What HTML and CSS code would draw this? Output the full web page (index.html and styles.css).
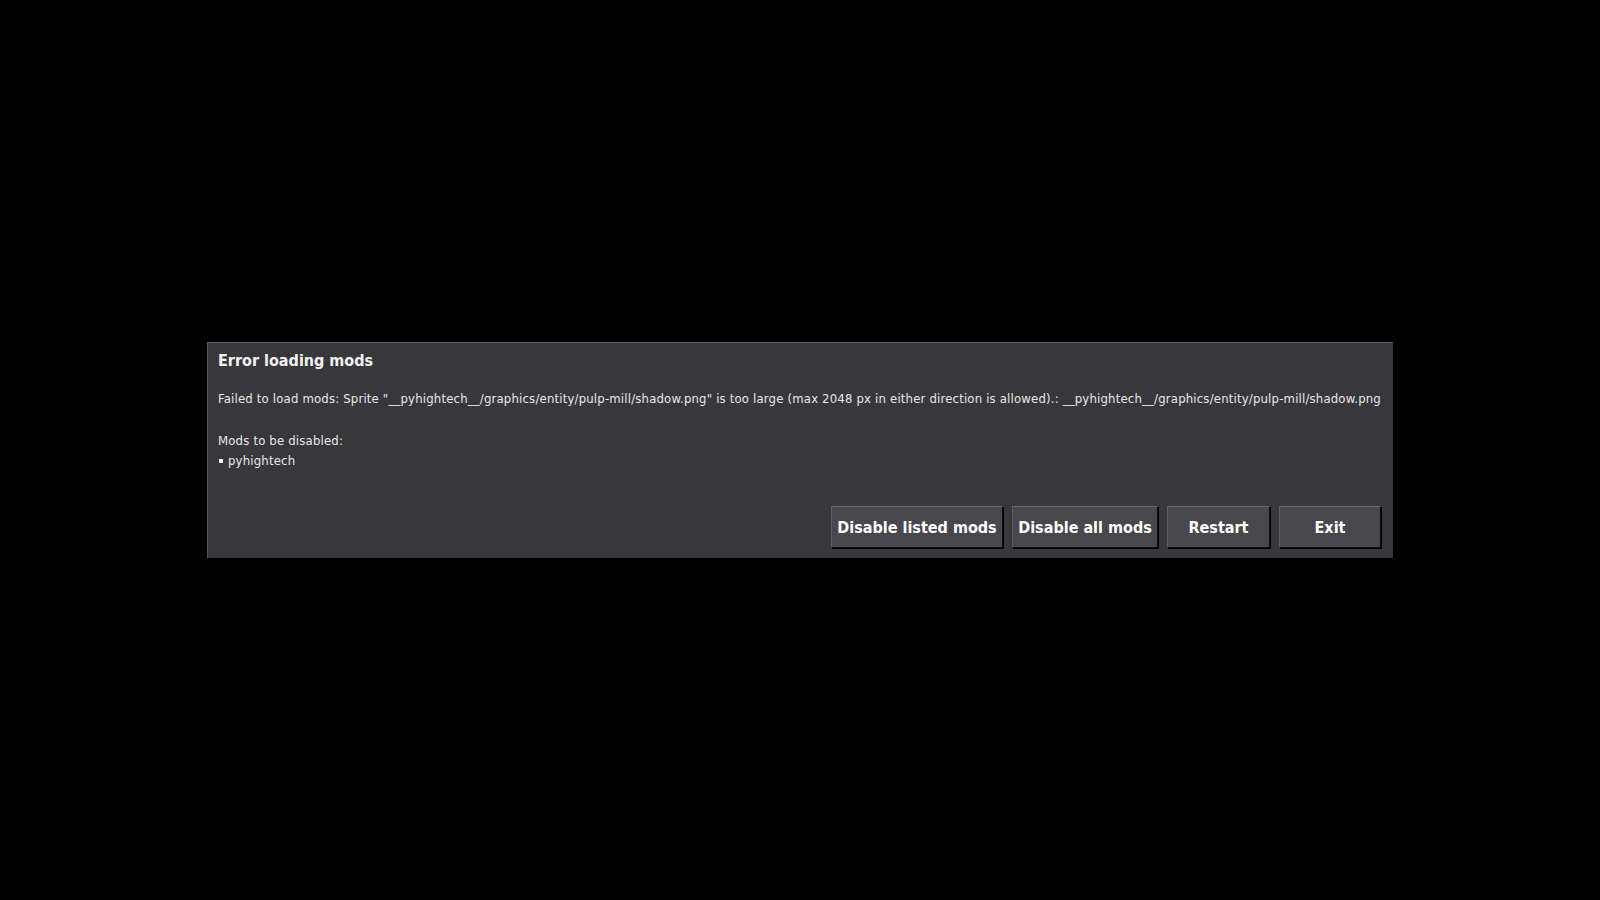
FILE: index.html
```html
<!DOCTYPE html>
<html lang="en">
<head>
    <meta charset="UTF-8">
    <title>Error loading mods</title>
    <link rel="stylesheet" href="styles.css">
</head>
<body>
    <div class="dialog">
        <h1 class="dialog-title">Error loading mods</h1>
        <div class="dialog-body">
            <p class="message">Failed to load mods: Sprite "__pyhightech__/graphics/entity/pulp-mill/shadow.png" is too large (max 2048 px in either direction is allowed).: __pyhightech__/graphics/entity/pulp-mill/shadow.png</p>
            <p class="list-title">Mods to be disabled:</p>
            <ul class="mod-list">
                <li>pyhightech</li>
            </ul>
        </div>
        <div class="buttons">
            <button class="btn btn-listed">Disable listed mods</button>
            <button class="btn btn-all">Disable all mods</button>
            <button class="btn btn-restart">Restart</button>
            <button class="btn btn-exit">Exit</button>
        </div>
    </div>
</body>
</html>
```

FILE: styles.css
```css
body, html {
    margin: 0;
    padding: 0;
    background: #000;
    height: 100vh;
    font-family: "DejaVu Sans Condensed", "DejaVu Sans", sans-serif;
    color: #fff;
}

body {
    display: flex;
    align-items: center;
    justify-content: center;
}

.dialog {
    width: 1186px;
    height: 216px;
    box-sizing: border-box;
    background: #38373c;
    border-top: 1px solid #5e5d61;
    border-left: 1px solid #58575b;
    padding: 6px 12px 10px 10px;
    display: flex;
    flex-direction: column;
}

.dialog-title {
    margin: 0;
    font-size: 16px;
    line-height: 24px;
    font-weight: bold;
    color: #f2f2f2;
}

.dialog-body {
    flex: 1;
    padding-top: 16px;
    font-size: 13px;
    line-height: 20px;
    letter-spacing: 0.18px;
    color: #e8e8e8;
}

.message {
    margin: 0 0 22px 0;
    white-space: nowrap;
}

.list-title {
    margin: 0;
}

.mod-list {
    margin: 0;
    padding: 0;
    list-style: none;
}

.mod-list li::before {
    content: "";
    display: inline-block;
    width: 4px;
    height: 4px;
    background: #fff;
    margin: 0 5px 2px 1px;
    vertical-align: middle;
}

.buttons {
    display: flex;
    justify-content: flex-end;
    gap: 9px;
}

.btn {
    height: 42px;
    box-sizing: border-box;
    background: #48474c;
    border: 1px solid #0d0d0e;
    border-top-color: #6a696d;
    border-left-color: #5c5b5f;
    box-shadow: 1px 1px 0 #000;
    color: #fff;
    font-family: inherit;
    font-size: 16px;
    font-weight: bold;
    white-space: nowrap;
    padding: 0;
}

.btn-listed {
    width: 172px;
}

.btn-all {
    width: 146px;
}

.btn-restart {
    width: 103px;
}

.btn-exit {
    width: 102px;
}
```
